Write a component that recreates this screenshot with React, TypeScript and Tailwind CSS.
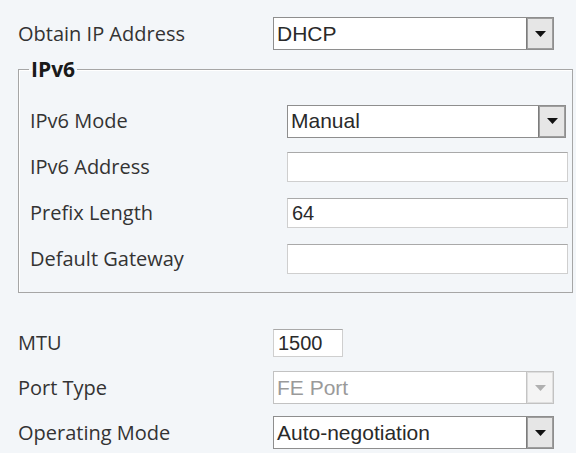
const labelFont = { fontFamily: '"Open Sans", "Noto Sans", sans-serif' };

function Arrow({ disabled }: { disabled?: boolean }) {
  return (
    <div
      className={
        'flex h-full w-[27px] shrink-0 items-center justify-center border-l ' +
        (disabled ? 'border-[#c4c4c4] bg-[#f4f4f4] shadow-[inset_0_0_0_1px_#dedede]' : 'border-[#7c7c7c] bg-[#e6e6e6] shadow-[inset_0_0_0_1px_#9e9e9e]')
      }
    >
      <svg width="11" height="6" viewBox="0 0 11 6">
        <path d="M0 0 L11 0 L5.5 6 Z" fill={disabled ? '#b0b0b0' : '#111'} />
      </svg>
    </div>
  );
}

function Select({ value, width, disabled }: { value: string; width: string; disabled?: boolean }) {
  return (
    <div
      className={
        'flex h-[33px] items-center border bg-white ' +
        width +
        (disabled ? ' border-[#c2c2c2]' : ' border-[#8e8e8e]')
      }
    >
      <span
        className={
          'flex-1 pl-[3px] font-["Liberation_Sans",Arial,sans-serif] text-[21px] ' +
          (disabled ? 'text-[#9a9a9a]' : 'text-[#2a2a2a]')
        }
      >
        {value}
      </span>
      <Arrow disabled={disabled} />
    </div>
  );
}

function Input({ value, width, height }: { value?: string; width: string; height: string }) {
  return (
    <div
      className={
        'flex items-center border border-[#cfcfcf] border-t-[#a9a9a9] bg-white pl-[4px] font-["Liberation_Sans",Arial,sans-serif] text-[20px] text-[#2a2a2a] ' +
        width +
        ' ' +
        height
      }
    >
      {value}
    </div>
  );
}

function Row({ label, labelWidth, height, children }: { label: string; labelWidth: string; height: string; children: React.ReactNode }) {
  return (
    <div className={'flex items-center ' + height}>
      <span className={'shrink-0 text-[20px] text-[#333333] ' + labelWidth} style={labelFont}>
        {label}
      </span>
      {children}
    </div>
  );
}

export default function App() {
  return (
    <div className="h-[453px] w-[576px] overflow-hidden bg-[#f3f6f9] pl-[18px] pt-[17px]">
      <Row label="Obtain IP Address" labelWidth="w-[255px]" height="h-[33px]">
        <Select value="DHCP" width="w-[281px]" />
      </Row>

      <fieldset className="mt-[10px] w-[555px] border border-[#a6a6a6] p-0 shadow-[inset_1px_1px_0_#ffffff]">
        <legend className="ml-[10px] px-[2px] text-[21px] font-bold leading-[18px] text-[#1a1a1a]" style={labelFont}>
          IPv6
        </legend>
        <div className="pb-[10px] pl-[11px] pt-[20px]">
          <Row label="IPv6 Mode" labelWidth="w-[257px]" height="h-[46px]">
            <Select value="Manual" width="w-[279px]" />
          </Row>
          <Row label="IPv6 Address" labelWidth="w-[257px]" height="h-[46px]">
            <Input width="w-[281px]" height="h-[30px]" />
          </Row>
          <Row label="Prefix Length" labelWidth="w-[257px]" height="h-[46px]">
            <Input value="64" width="w-[281px]" height="h-[30px]" />
          </Row>
          <Row label="Default Gateway" labelWidth="w-[257px]" height="h-[46px]">
            <Input width="w-[281px]" height="h-[30px]" />
          </Row>
        </div>
      </fieldset>

      <div className="mt-[27px]">
        <Row label="MTU" labelWidth="w-[255px]" height="h-[45px]">
          <Input value="1500" width="w-[70px]" height="h-[28px]" />
        </Row>
        <Row label="Port Type" labelWidth="w-[255px]" height="h-[45px]">
          <Select value="FE Port" width="w-[281px]" disabled />
        </Row>
        <Row label="Operating Mode" labelWidth="w-[255px]" height="h-[45px]">
          <Select value="Auto-negotiation" width="w-[281px]" />
        </Row>
      </div>
    </div>
  );
}
